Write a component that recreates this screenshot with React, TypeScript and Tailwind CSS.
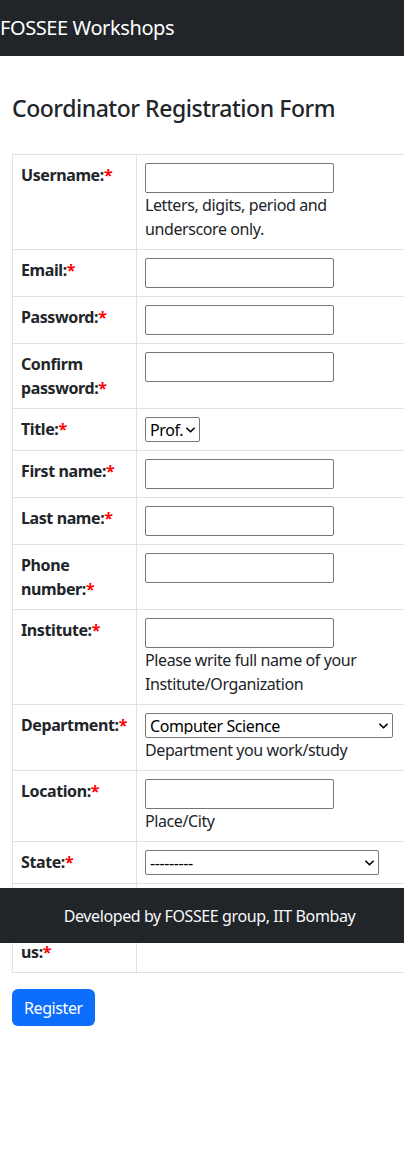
import type { ReactNode } from 'react'

type Field = {
  label: string
  control: ReactNode
  help?: string
}

function TextInput({ type = 'text' }: { type?: string }) {
  return (
    <input
      type={type}
      className="block w-[189px] h-[30px] border border-[#767676] rounded-[2px] px-1 text-base bg-white"
    />
  )
}

function Select({ width, options }: { width: string; options: string[] }) {
  return (
    <div className={`relative ${width} h-[25px]`}>
      <select
        className="appearance-none block w-full h-full border border-[#767676] rounded-[2px] bg-white text-base leading-none pl-[4px] pr-[10px] text-black"
        defaultValue={options[0]}
      >
        {options.map((o) => (
          <option key={o}>{o}</option>
        ))}
      </select>
      {/* chevron */}
      <svg
        viewBox="0 0 10 6"
        className="pointer-events-none absolute right-[5px] top-1/2 -translate-y-1/2 w-[9px] h-[6px]"
        fill="none"
        stroke="#000"
        strokeWidth="1.8"
        strokeLinecap="round"
        strokeLinejoin="round"
      >
        <path d="M1 1l4 4 4-4" />
      </svg>
    </div>
  )
}

const fields: Field[] = [
  { label: 'Username:', control: <TextInput />, help: 'Letters, digits, period and underscore only.' },
  { label: 'Email:', control: <TextInput type="email" /> },
  { label: 'Password:', control: <TextInput type="password" /> },
  { label: 'Confirm password:', control: <TextInput type="password" /> },
  { label: 'Title:', control: <Select width="w-[55px]" options={['Prof.', 'Dr.', 'Mr.', 'Ms.']} /> },
  { label: 'First name:', control: <TextInput /> },
  { label: 'Last name:', control: <TextInput /> },
  { label: 'Phone number:', control: <TextInput /> },
  { label: 'Institute:', control: <TextInput />, help: 'Please write full name of your Institute/Organization' },
  {
    label: 'Department:',
    control: <Select width="w-[248px]" options={['Computer Science', 'Electrical Engineering', 'Mechanical Engineering']} />,
    help: 'Department you work/study',
  },
  { label: 'Location:', control: <TextInput />, help: 'Place/City' },
  { label: 'State:', control: <Select width="w-[234px]" options={['---------', 'Maharashtra', 'Gujarat']} /> },
  { label: 'How did you hear about us:', control: <Select width="w-[234px]" options={['---------', 'Email', 'Poster']} /> },
]

export default function App() {
  return (
    <div className="relative w-full min-h-[1155px] overflow-hidden bg-white text-[#212529] font-['Noto_Sans','Open_Sans',sans-serif] text-base leading-6 tracking-[-0.025em]">
      {/* Navbar */}
      <nav className="h-14 bg-[#212529] flex items-center">
        <span className="text-white text-[20px] leading-none">FOSSEE Workshops</span>
      </nav>

      <div className="px-3">
        <h3 className="mt-[38px] mb-[31px] text-[23px] leading-[29px] font-medium tracking-[-0.02em]">
          Coordinator Registration Form
        </h3>

        <table className="w-[403px] table-fixed border-collapse">
          <colgroup>
            <col className="w-[124px]" />
            <col />
          </colgroup>
          <tbody>
            {fields.map((f) => (
              <tr key={f.label}>
                <th className="border border-[#dee2e6] p-2 text-left align-top font-bold">
                  {f.label}
                  <span className="text-[red]">*</span>
                </th>
                <td className="border border-[#dee2e6] p-2 align-top">
                  {f.control}
                  {f.help && <span className="block">{f.help}</span>}
                </td>
              </tr>
            ))}
          </tbody>
        </table>

        <button className="mt-4 h-[37px] bg-[#0d6efd] text-white rounded-md px-3 leading-6">Register</button>
      </div>

      {/* Footer overlay */}
      <footer className="absolute top-[888px] left-0 right-0 h-[55px] bg-[#212529] flex items-center justify-center pl-[15px]">
        <span className="text-[#f8f9fa]">Developed by FOSSEE group, IIT Bombay</span>
      </footer>
    </div>
  )
}
